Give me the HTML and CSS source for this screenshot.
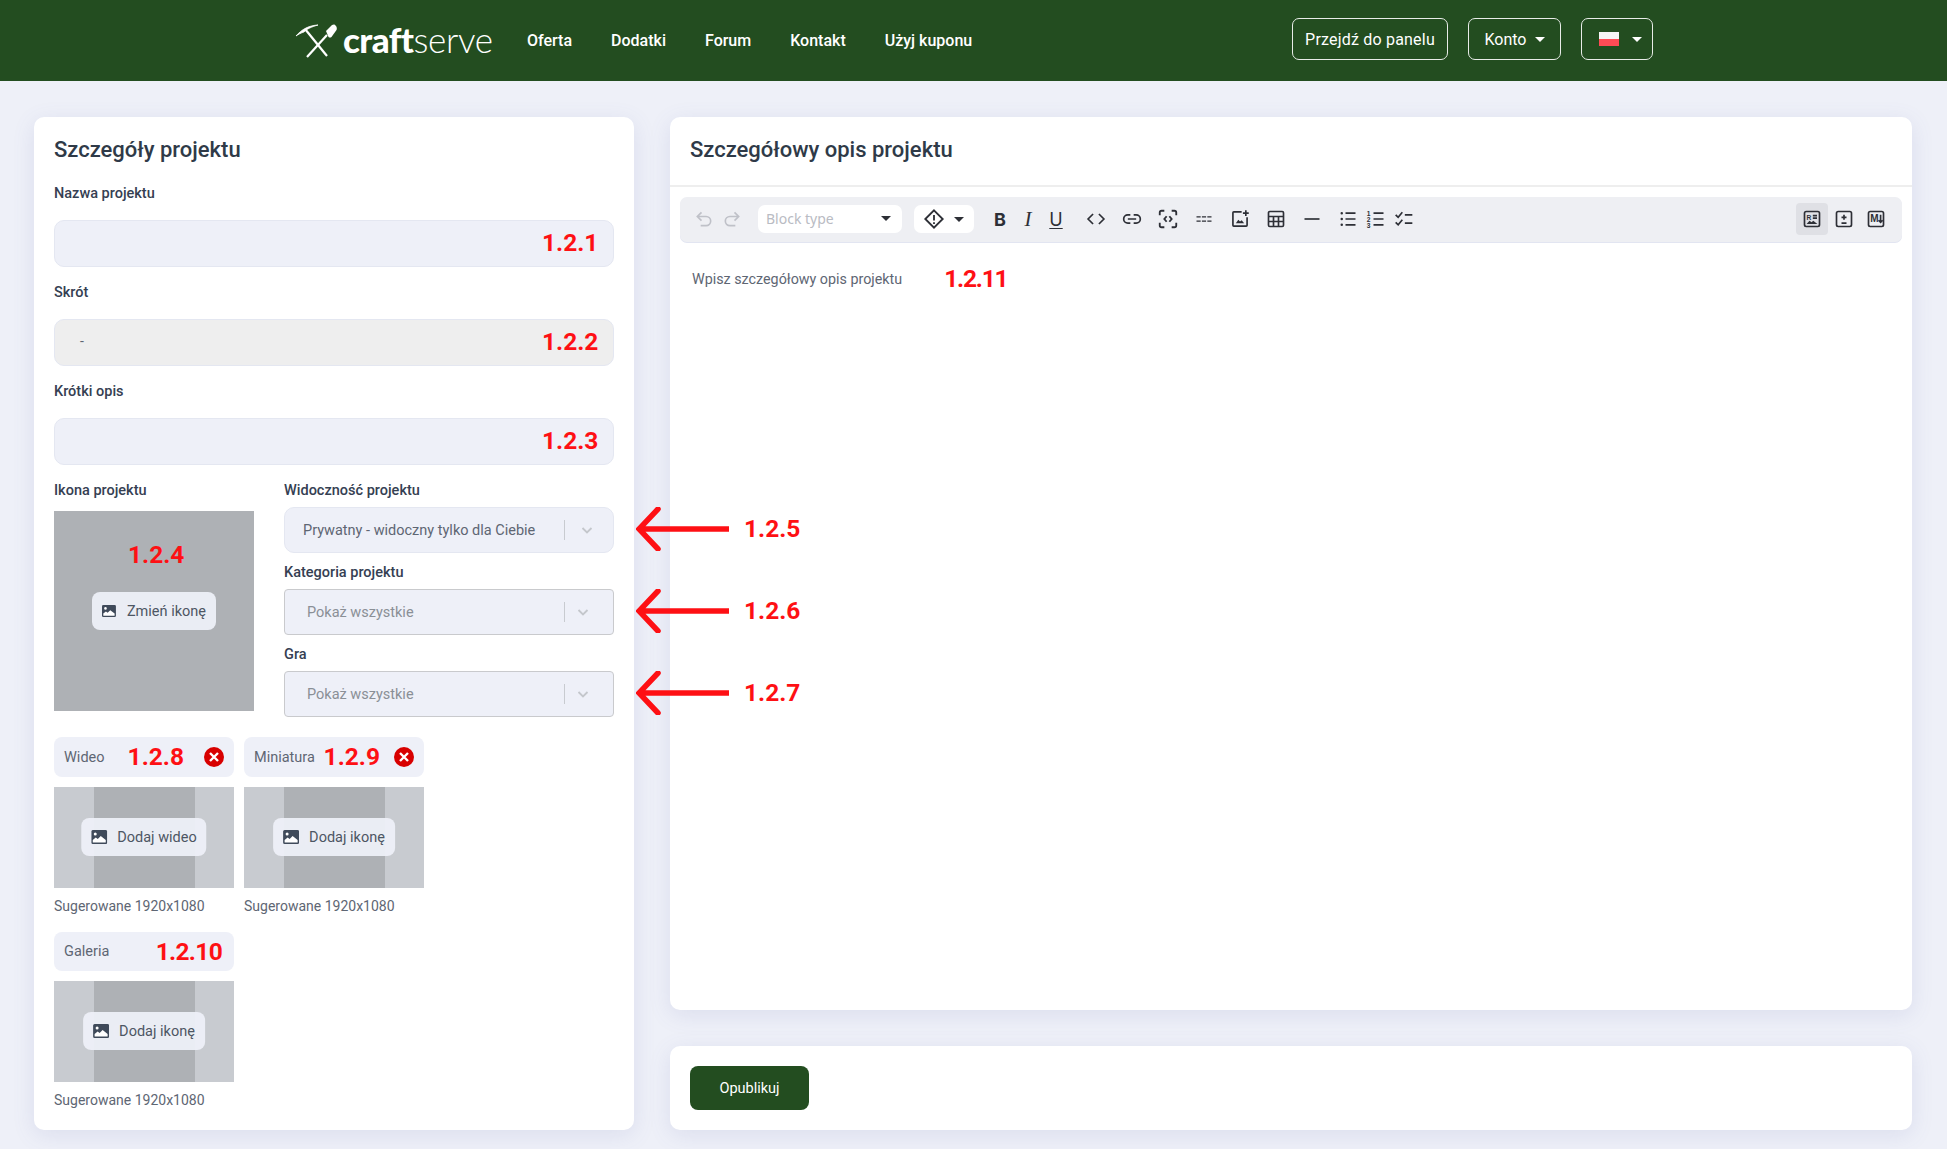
FILE: index.html
```html
<!DOCTYPE html>
<html lang="pl">

<head>
    <meta charset="UTF-8">
    <title>Szczegóły projektu</title>
    <link rel="stylesheet" href="styles.css">
</head>

<body>

    <svg class="sprite" width="0" height="0">
        <symbol id="pic" viewBox="0 0 16 14">
            <rect width="16" height="14" rx="1.5" fill="#3f4a5a" />
            <circle cx="4" cy="4" r="1.5" fill="#fff" />
            <path d="M1.5 12.5V10l3-2.5 2 1.5 3-3 5 4v2.500z" fill="#fff" />
        </symbol>
        <symbol id="chev" viewBox="0 0 14 14">
            <path d="M2.5 5l4.5 4.5L11.5 5" fill="none" stroke="#c4c7cc" stroke-width="1.8" />
        </symbol>
    </svg>

    <header class="topbar">
        <a class="logo">
            <svg class="logo-mark" width="42" height="34" viewBox="0 0 42 34">
                <path d="M1 12C7 5 14 1.5 23 1C16 3 12 5 9 8C6 9 3 10.500 1 12z" fill="#fff" stroke="#fff" stroke-width=".8" />
                <path d="M10 5l22 27" stroke="#fff" stroke-width="2.2" />
                <path d="M32 11L12 33" stroke="#fff" stroke-width="2.2" />
                <path d="M31 7l6-6c2-1 3-.5 4 1s1 3 .5 4l-5 7c-1 .8-2 .8-3 0z" fill="#fff" />
            </svg>
            <span class="logo-text"><b>craft</b>serve</span>
        </a>
        <nav class="nav">
            <a>Oferta</a>
            <a>Dodatki</a>
            <a>Forum</a>
            <a>Kontakt</a>
            <a>Użyj kuponu</a>
        </nav>
        <div class="top-actions">
            <button class="top-btn panel-btn">Przejdź do panelu</button>
            <button class="top-btn konto-btn">Konto <i class="caret"></i></button>
            <button class="top-btn lang-btn"><span class="flag"></span><i class="caret"></i></button>
        </div>
    </header>

    <main class="page">
        <section class="card details">
            <h2>Szczegóły projektu</h2>

            <div class="field">
                <label>Nazwa projektu</label>
                <div class="input"><span class="note in-input">1.2.1</span></div>
            </div>
            <div class="field">
                <label>Skrót</label>
                <div class="input disabled">-<span class="note in-input">1.2.2</span></div>
            </div>
            <div class="field">
                <label>Krótki opis</label>
                <div class="input"><span class="note in-input">1.2.3</span></div>
            </div>

            <div class="columns">
                <div class="icon-col">
                    <label>Ikona projektu</label>
                    <div class="icon-box">
                        <span class="ghost">200 x 200</span>
                        <span class="note icon-note">1.2.4</span>
                        <button class="pic-btn"><svg width="16" height="14"><use href="#pic" /></svg>Zmień ikonę</button>
                    </div>
                </div>
                <div class="select-col">
                    <label>Widoczność projektu</label>
                    <div class="select first">
                        <span>Prywatny - widoczny tylko dla Ciebie</span>
                        <i class="sep"></i>
                        <svg width="14" height="14"><use href="#chev" /></svg>
                        <div class="callout">
                            <svg width="93" height="44" viewBox="0 0 93 44"><path d="M93 22H4M22 2L3 22l19 20" fill="none" stroke="#fe1014" stroke-width="5.500" stroke-linecap="round" /></svg>
                            <span class="note">1.2.5</span>
                        </div>
                    </div>
                    <label>Kategoria projektu</label>
                    <div class="select">
                        <span>Pokaż wszystkie</span>
                        <i class="sep"></i>
                        <svg width="14" height="14"><use href="#chev" /></svg>
                        <div class="callout">
                            <svg width="93" height="44" viewBox="0 0 93 44"><path d="M93 22H4M22 2L3 22l19 20" fill="none" stroke="#fe1014" stroke-width="5.500" stroke-linecap="round" /></svg>
                            <span class="note">1.2.6</span>
                        </div>
                    </div>
                    <label>Gra</label>
                    <div class="select">
                        <span>Pokaż wszystkie</span>
                        <i class="sep"></i>
                        <svg width="14" height="14"><use href="#chev" /></svg>
                        <div class="callout">
                            <svg width="93" height="44" viewBox="0 0 93 44"><path d="M93 22H4M22 2L3 22l19 20" fill="none" stroke="#fe1014" stroke-width="5.500" stroke-linecap="round" /></svg>
                            <span class="note">1.2.7</span>
                        </div>
                    </div>
                </div>
            </div>

            <div class="uploads">
                <div class="upload">
                    <div class="tag">
                        <span>Wideo</span><span class="note">1.2.8</span>
                        <svg class="remove" width="20" height="20" viewBox="0 0 20 20"><circle cx="10" cy="10" r="10" fill="#d80000" /><path d="M6 6l8 8M14 6l-8 8" stroke="#fff" stroke-width="2.4" /></svg>
                    </div>
                    <div class="thumb">
                        <div class="stripe"><span class="ghost">Wideo</span></div>
                        <button class="pic-btn"><svg width="16" height="14"><use href="#pic" /></svg>Dodaj wideo</button>
                    </div>
                    <p class="hint">Sugerowane 1920x1080</p>
                </div>
                <div class="upload">
                    <div class="tag tag-mini">
                        <span>Miniatura</span><span class="note">1.2.9</span>
                        <svg class="remove" width="20" height="20" viewBox="0 0 20 20"><circle cx="10" cy="10" r="10" fill="#d80000" /><path d="M6 6l8 8M14 6l-8 8" stroke="#fff" stroke-width="2.4" /></svg>
                    </div>
                    <div class="thumb">
                        <div class="stripe"><span class="ghost">Miniatura</span></div>
                        <button class="pic-btn"><svg width="16" height="14"><use href="#pic" /></svg>Dodaj ikonę</button>
                    </div>
                    <p class="hint">Sugerowane 1920x1080</p>
                </div>
                <div class="upload">
                    <div class="tag">
                        <span>Galeria</span><span class="note tight">1.2.10</span>
                    </div>
                    <div class="thumb">
                        <div class="stripe"><span class="ghost">Galeria</span></div>
                        <button class="pic-btn"><svg width="16" height="14"><use href="#pic" /></svg>Dodaj ikonę</button>
                    </div>
                    <p class="hint">Sugerowane 1920x1080</p>
                </div>
            </div>
        </section>

        <div class="right-col">
            <section class="card editor">
                <h2 class="editor-title">Szczegółowy opis projektu</h2>
                <div class="toolbar">
                    <button class="tool off"><svg width="20" height="20" viewBox="0 0 24 24"><path d="M9 14L4 9l5-5M4 9h10.5a5.5 5.5 0 0 1 0 11H8" /></svg></button>
                    <button class="tool off"><svg width="20" height="20" viewBox="0 0 24 24"><path d="M15 14l5-5-5-5M20 9H9.5a5.5 5.5 0 0 0 0 11H16" /></svg></button>
                    <div class="tool-select block-type"><span>Block type</span><i class="caret dark"></i></div>
                    <div class="tool-select admon">
                        <svg width="22" height="22" viewBox="0 0 24 24"><path d="M12 2.5l9.5 9.5-9.5 9.5L2.500 12zM12 7.500v6M12 15.500v2" /></svg>
                        <i class="caret dark"></i>
                    </div>
                    <button class="tool text-tool bold first-fmt">B</button>
                    <button class="tool text-tool ital">I</button>
                    <button class="tool text-tool under">U</button>
                    <button class="tool wide gap-left"><svg width="20" height="20" viewBox="0 0 24 24"><path d="M8.500 6l-6 6 6 6M15.500 6l6 6-6 6" /></svg></button>
                    <button class="tool wide"><svg width="20" height="20" viewBox="0 0 24 24"><path d="M10 7H7a5 5 0 0 0 0 10h3M14 7h3a5 5 0 0 1 0 10h-3M7 12h10" /></svg></button>
                    <button class="tool wide"><svg width="22" height="22" viewBox="0 0 24 24"><path d="M8 3H5a2 2 0 0 0-2 2v3M16 3h3a2 2 0 0 1 2 2v3M8 21H5a2 2 0 0 1-2-2v-3M16 21h3a2 2 0 0 0 2-2v-3M10.500 9l-2.500 3 2.500 3M13.500 9l2.500 3-2.500 3" /></svg></button>
                    <button class="tool wide"><svg width="20" height="20" viewBox="0 0 24 24"><path class="thin" d="M3 9.500h18M3 14.500h18" /></svg></button>
                    <button class="tool wide"><svg width="20" height="20" viewBox="0 0 24 24"><path d="M14 3.500H4.500a1 1 0 0 0-1 1v15a1 1 0 0 0 1 1h15a1 1 0 0 0 1-1V10M19 1.500v7M15.500 5h7" /><path class="solid" d="M7 17l3-4 2 2 2-1.500 3 3.500z" /></svg></button>
                    <button class="tool wide"><svg width="20" height="20" viewBox="0 0 24 24"><path d="M4.500 3h15A1.500 1.500 0 0 1 21 4.500v15a1.500 1.500 0 0 1-1.500 1.500h-15A1.500 1.500 0 0 1 3 19.500v-15A1.500 1.500 0 0 1 4.500 3zM3 9h18M3 15h18M9 9v12M15 9v12" /></svg></button>
                    <button class="tool wide"><svg width="20" height="20" viewBox="0 0 24 24"><path d="M3 12h18" /></svg></button>
                    <button class="tool list-first"><svg width="20" height="20" viewBox="0 0 24 24"><path d="M9 5h12M9 12h12M9 19h12" /><path class="solid" d="M3 5a1.500 1.500 0 1 0 3 0a1.500 1.500 0 1 0-3 0zM3 12a1.500 1.500 0 1 0 3 0a1.500 1.500 0 1 0-3 0zM3 19a1.500 1.500 0 1 0 3 0a1.500 1.500 0 1 0-3 0z" /></svg></button>
                    <button class="tool"><svg width="20" height="20" viewBox="0 0 24 24"><path d="M9 5h12M9 12h12M9 19h12" /><text x="1" y="8" class="tiny">1</text><text x="1" y="15" class="tiny">2</text><text x="1" y="22.500" class="tiny">3</text></svg></button>
                    <button class="tool"><svg width="20" height="20" viewBox="0 0 24 24"><path d="M2 7l3 3 5-6M2 16l3 3 5-6M13 7h9M13 17h9" /></svg></button>

                    <div class="view-tools">
                        <button class="view-btn active"><svg width="20" height="20" viewBox="0 0 24 24"><rect x="3" y="3" width="18" height="18" rx="2" /><path d="M13 8h5M13 11h5" /><text x="5.500" y="13" class="tiny">R</text><path class="solid" d="M5.500 18l3.500-4 2.500 2 2-2 5 4z" /></svg></button>
                        <button class="view-btn"><svg width="20" height="20" viewBox="0 0 24 24"><rect x="3" y="3" width="18" height="18" rx="2" /><path d="M12 7v6M9 10h6M9 17h6" /></svg></button>
                        <button class="view-btn"><svg width="20" height="20" viewBox="0 0 24 24"><rect x="3" y="3" width="18" height="18" rx="2" /><text x="5" y="16" class="tiny big">M</text><path d="M17.500 7v9M15 13.500l2.500 2.500 2.500-2.500" /></svg></button>
                    </div>
                </div>
                <div class="editor-body">
                    <span class="placeholder">Wpisz szczegółowy opis projektu</span>
                    <span class="note tighter">1.2.11</span>
                </div>
            </section>

            <section class="card publish">
                <button class="publish-btn">Opublikuj</button>
            </section>
        </div>
    </main>

</body>

</html>
```

FILE: styles.css
```css
* {
    box-sizing: border-box;
}

body {
    font-family: Roboto, sans-serif;
    background: #eef0f8;
    margin: 0;
    color: #3a4456;
}

button {
    font-family: inherit;
    border: none;
    background: none;
    padding: 0;
}

.sprite {
    position: absolute;
}

/* top bar */
.topbar {
    height: 81px;
    background: #234d20;
    display: flex;
    align-items: center;
    padding: 0 294px 0 295px;
    color: #fff;
}

.logo {
    display: flex;
    align-items: flex-end;
    height: 34px;
    width: 197px;
}

.logo-mark {
    flex: none;
    margin-top: -2px;
}

.logo-text {
    font-family: Lato, sans-serif;
    font-size: 35px;
    font-weight: 300;
    line-height: 34px;
    margin: 0 0 2px 6px;
    letter-spacing: -0.3px;
}

.logo-text b {
    font-weight: 900;
    letter-spacing: -0.6px;
}

.nav {
    display: flex;
    gap: 39px;
    margin-left: 35px;
    font-size: 16px;
    font-weight: 500;
}

.top-actions {
    margin-left: auto;
    display: flex;
    gap: 20px;
    margin-top: -3px;
}

.top-btn {
    height: 42px;
    border: 1.5px solid #e8ece8;
    border-radius: 7px;
    color: #fff;
    font-size: 16px;
    display: flex;
    align-items: center;
    justify-content: center;
}

.panel-btn {
    width: 156px;
    letter-spacing: 0.2px;
}

.konto-btn {
    width: 93px;
    gap: 8px;
}

.lang-btn {
    width: 72px;
    gap: 13px;
    padding-left: 6px;
}

.caret {
    display: inline-block;
    width: 0;
    height: 0;
    border-left: 5px solid transparent;
    border-right: 5px solid transparent;
    border-top: 5px solid #fff;
}

.caret.dark {
    border-top-color: #2d2f36;
}

.flag {
    width: 20px;
    height: 14px;
    background: linear-gradient(#f5f5f5 50%, #ff4b55 50%);
}

/* page */
.page {
    display: grid;
    grid-template-columns: 600px 1242px;
    gap: 36px;
    padding: 36px 35px 19px 34px;
}

.card {
    background: #fff;
    border-radius: 10px;
    box-shadow: 0 5px 22px rgba(90, 100, 170, 0.13);
}

h2 {
    font-size: 22px;
    font-weight: 500;
    line-height: 26px;
    margin: 0 0 20px;
    color: #2f3a48;
}

.details {
    padding: 20px;
}

label {
    display: block;
    font-size: 14.5px;
    font-weight: 500;
    line-height: 22px;
    color: #354052;
}

.field {
    margin-bottom: 15px;
}

.field label {
    margin-bottom: 15px;
}

.input {
    position: relative;
    height: 47px;
    background: #eef0f8;
    border: 1px solid #e4e7f1;
    border-radius: 10px;
    padding: 0 25px;
    line-height: 42px;
    font-size: 14px;
    color: #5e6673;
}

.input.disabled {
    background: #eeeeee;
}

/* red numbers lying over the form */
.note {
    color: #fe1014;
    font-size: 24.5px;
    font-weight: 700;
    line-height: 30px;
    white-space: nowrap;
}

.note.tight {
    letter-spacing: -0.7px;
}

.note.tighter {
    letter-spacing: -1.2px;
}

.in-input {
    position: absolute;
    left: 487px;
    top: 7px;
}

.columns {
    display: grid;
    grid-template-columns: 200px 330px;
    gap: 30px;
    margin-bottom: 20px;
}

.icon-col label {
    margin-bottom: 9px;
}

.icon-box {
    position: relative;
    height: 200px;
    background: #aeb1b5;
    display: flex;
    align-items: center;
    justify-content: center;
}

.ghost {
    color: #b9bcc0;
    font-size: 20px;
    font-weight: 500;
}

.icon-box .ghost {
    position: absolute;
    top: 88px;
}

.icon-note {
    position: absolute;
    top: 29px;
    left: 74px;
}

.pic-btn {
    position: absolute;
    height: 38px;
    display: flex;
    align-items: center;
    gap: 10px;
    padding: 0 10px;
    background: rgba(238, 240, 248, 0.94);
    border-radius: 8px;
    font-size: 14.5px;
    color: #4d5663;
    white-space: nowrap;
}

.icon-box .pic-btn {
    top: 81px;
    left: 38px;
    width: 124px;
    gap: 11px;
}

.select-col label {
    margin-bottom: 5px;
}

.select {
    position: relative;
    height: 46px;
    margin-bottom: 9px;
    background: #eef0f8;
    border: 1px solid #c9cacd;
    border-radius: 4px;
    display: flex;
    align-items: center;
    padding-left: 22px;
    font-size: 14.5px;
    color: #8a8f96;
}

.select:last-child {
    margin-bottom: 0;
}

.select.first {
    border-color: #e4e7f1;
    border-radius: 10px;
    padding-left: 18px;
    color: #5e6673;
}

.select > span {
    width: 257px;
    white-space: nowrap;
}

.select.first > span {
    width: 261px;
}

.sep {
    width: 1px;
    height: 20px;
    background: #c8cbd0;
    margin-right: 11px;
}

.select.first .sep {
    margin-right: 15px;
}

.callout {
    position: absolute;
    left: 351px;
    top: -1px;
    display: flex;
    align-items: center;
    gap: 15px;
}

.uploads {
    display: grid;
    grid-template-columns: 180px 180px;
    column-gap: 10px;
    row-gap: 16px;
}

.tag {
    display: flex;
    align-items: center;
    background: #eef0f8;
    border-radius: 8px;
    padding: 0 10px;
    height: 39px;
    margin-bottom: 10px;
    font-size: 14.5px;
    color: #5e6673;
}

.tag .note {
    margin-left: auto;
    margin-right: 2px;
}

.tag .remove {
    margin-left: 18px;
    flex: none;
}

.tag-mini .remove {
    margin-left: 12px;
}

.upload:nth-child(-n+2) .tag {
    height: 40px;
}

.thumb {
    position: relative;
    height: 101px;
    background: #c8cbd0;
    display: flex;
    justify-content: center;
    align-items: center;
}

.stripe {
    width: 101px;
    height: 100%;
    background: #aeb1b5;
    display: flex;
    align-items: center;
    justify-content: center;
}

.thumb .pic-btn {
    top: 31px;
    left: 50%;
    transform: translateX(-50%);
}

.hint {
    margin: 8px 0 0;
    font-size: 14px;
    line-height: 20px;
    color: #5e6673;
}

/* right side */
.right-col {
    display: flex;
    flex-direction: column;
    gap: 36px;
}

.editor {
    flex: 1;
}

.editor-title {
    margin: 0;
    padding: 20px 20px 22px;
    border-bottom: 2px solid #eeeeee;
}

.toolbar {
    margin: 10px 10px 0;
    height: 45px;
    background: #eeeff3;
    border-radius: 7px;
    box-shadow: 0 1px 0 #e2e5f1;
    padding: 0 10px 1px;
    display: flex;
    align-items: center;
}

.tool {
    width: 28px;
    height: 32px;
    flex: none;
    display: flex;
    align-items: center;
    justify-content: center;
    color: #2d2f36;
}

.tool.wide {
    width: 36px;
}

.gap-left {
    margin-left: 8px;
}

.list-first {
    margin-left: 4px;
}

.first-fmt {
    margin-left: 12px;
}

.toolbar svg path,
.toolbar svg rect {
    fill: none;
    stroke: #2d2f36;
    stroke-width: 2;
}

.toolbar svg path.thin {
    stroke-width: 1.6;
    stroke-dasharray: 5 1.5;
}

.toolbar svg path.solid {
    fill: #2d2f36;
    stroke: none;
}

.toolbar .off svg path {
    stroke: #bfc1c8;
}

.toolbar .tiny {
    font-family: "Liberation Sans", sans-serif;
    font-size: 8px;
    font-weight: 700;
    fill: #2d2f36;
}

.toolbar .tiny.big {
    font-size: 12px;
}

.text-tool {
    font-size: 18px;
    font-family: Inter, sans-serif;
}

.bold {
    font-weight: 700;
}

.ital {
    font-family: "Liberation Serif", serif;
    font-style: italic;
    font-size: 21px;
}

.under {
    text-decoration: underline;
    text-underline-offset: 2px;
}

.tool-select {
    height: 28px;
    flex: none;
    background: #fff;
    border-radius: 7px;
    display: flex;
    align-items: center;
    margin-left: 12px;
}

.block-type {
    width: 144px;
    padding: 0 11px 1px 8px;
    justify-content: space-between;
    font-family: "Noto Sans", sans-serif;
    font-size: 14px;
    color: #b9bbc3;
}

.admon {
    width: 60px;
    padding-left: 9px;
    gap: 9px;
}

.view-tools {
    margin-left: auto;
    display: flex;
}

.view-btn {
    width: 32px;
    height: 32px;
    display: flex;
    align-items: center;
    justify-content: center;
    border-radius: 4px;
}

.view-btn.active {
    background: #dfe0e5;
}

.editor-body {
    padding: 22px;
    display: flex;
    align-items: center;
    gap: 42px;
}

.placeholder {
    font-size: 14.3px;
    color: #5e6673;
}

.publish {
    height: 84px;
    padding: 20px;
}

.publish-btn {
    width: 119px;
    height: 44px;
    background: #234d20;
    border-radius: 8px;
    color: #fff;
    font-size: 14.5px;
}
```
